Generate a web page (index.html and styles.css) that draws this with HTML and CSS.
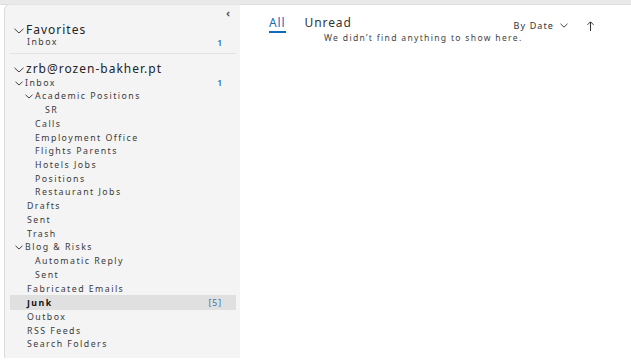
FILE: index.html
```html
<!DOCTYPE html>
<html>
<head>
<meta charset="utf-8">
<link rel="stylesheet" href="styles.css">
</head>
<body>
<div class="topband"></div>
<div class="app">
  <aside class="sidebar">
    <div class="collapse">&#8249;</div>
    <div class="group-title"><span class="chev">
      <svg width="10" height="6" viewBox="0 0 10 6"><path d="M0.5 0.8 L5 5 L9.5 0.8" fill="none" stroke="#444" stroke-width="1"/></svg></span>Favorites</div>
    <div class="row l1"><span class="name">Inbox</span><span class="count">1</span></div>
    <div class="sep"></div>
    <div class="group-title acct"><span class="chev">
      <svg width="10" height="6" viewBox="0 0 10 6"><path d="M0.5 0.8 L5 5 L9.5 0.8" fill="none" stroke="#444" stroke-width="1"/></svg></span>zrb@rozen-bakher.pt</div>
    <div class="row l0"><span class="schev"><svg width="8" height="5" viewBox="0 0 8 5"><path d="M0.5 0.8 L4 4 L7.5 0.8" fill="none" stroke="#444" stroke-width="1"/></svg></span><span class="name">Inbox</span><span class="count">1</span></div>
    <div class="row l1c"><span class="schev"><svg width="8" height="5" viewBox="0 0 8 5"><path d="M0.5 0.8 L4 4 L7.5 0.8" fill="none" stroke="#444" stroke-width="1"/></svg></span><span class="name">Academic Positions</span></div>
    <div class="row l3"><span class="name">SR</span></div>
    <div class="row l2"><span class="name">Calls</span></div>
    <div class="row l2"><span class="name">Employment Office</span></div>
    <div class="row l2"><span class="name">Flights Parents</span></div>
    <div class="row l2"><span class="name">Hotels Jobs</span></div>
    <div class="row l2"><span class="name">Positions</span></div>
    <div class="row l2"><span class="name">Restaurant Jobs</span></div>
    <div class="row l1"><span class="name">Drafts</span></div>
    <div class="row l1"><span class="name">Sent</span></div>
    <div class="row l1"><span class="name">Trash</span></div>
    <div class="row l0"><span class="schev"><svg width="8" height="5" viewBox="0 0 8 5"><path d="M0.5 0.8 L4 4 L7.5 0.8" fill="none" stroke="#444" stroke-width="1"/></svg></span><span class="name">Blog &amp; Risks</span></div>
    <div class="row l2"><span class="name">Automatic Reply</span></div>
    <div class="row l2"><span class="name">Sent</span></div>
    <div class="row l1"><span class="name">Fabricated Emails</span></div>
    <div class="row l1 selected"><span class="name">Junk</span><span class="count">[5]</span></div>
    <div class="row l1"><span class="name">Outbox</span></div>
    <div class="row l1"><span class="name">RSS Feeds</span></div>
    <div class="row l1"><span class="name">Search Folders</span></div>
  </aside>
  <main class="main">
    <div class="toolbar">
      <div class="tabs">
        <span class="tab active">All</span>
        <span class="tab">Unread</span>
      </div>
      <div class="sort">
        <span class="bydate">By Date</span>
        <svg class="sortchev" width="8" height="5" viewBox="0 0 8 5"><path d="M0.5 0.8 L4 4.2 L7.5 0.8" fill="none" stroke="#444" stroke-width="1"/></svg>
        <svg class="arrow" width="7" height="10" viewBox="0 0 7 10"><path d="M3.5 10 V1 M0.5 3.8 L3.5 0.8 L6.5 3.8" fill="none" stroke="#333" stroke-width="1"/></svg>
      </div>
    </div>
    <div class="empty">We didn’t find anything to show here.</div>
  </main>
</div>
</body>
</html>
```
FILE: styles.css
```css
* { box-sizing: border-box; }
html, body { margin: 0; padding: 0; background: #fff; }
body {
  font-family: "Noto Sans", "Open Sans", sans-serif;
  color: #242424;
  width: 631px;
  height: 364px;
  overflow: hidden;
}
.topband {
  height: 5px;
  background: #e9e9e9;
  border-bottom: 1px solid #dedede;
}
.app {
  display: flex;
  height: 353px;
}
.sidebar {
  width: 236px;
  margin-left: 4px;
  margin-top: -1px;
  background: #f4f4f4;
  border-left: 1px solid #dcdcdc;
  border-top: 1px solid #e4e4e4;
  border-top-left-radius: 6px;
  padding: 4px 4px 0 5px;
  position: relative;
}
.collapse {
  position: absolute;
  right: 10px;
  top: 1px;
  font-size: 11px;
  color: #555;
  font-weight: bold;
  line-height: 14px;
}
.group-title {
  display: flex;
  align-items: center;
  font-size: 12px;
  line-height: 12px;
  margin-top: 14.5px;
  padding-left: 4px;
  letter-spacing: 1px;
  color: #242424;
}
.group-title.acct { margin-top: 9px; margin-bottom: 1px; }
.chev { width: 12px; display: inline-flex; align-items: center; margin-top: 2px; }
.row {
  display: flex;
  align-items: center;
  height: 13.74px;
  font-size: 8.8px;
  letter-spacing: 1.45px;
  color: #3a3a3a;
  padding-right: 14px;
}
.row .name { flex: 1; white-space: nowrap; }
.row .count { color: #2f6fb3; font-weight: 600; font-size: 8.5px; letter-spacing: 0; }
.schev { width: 10px; display: inline-flex; align-items: center; margin-top: 1px; }
.l0 { padding-left: 5px; }
.l1 { padding-left: 17px; }
.l1c { padding-left: 15px; }
.l2 { padding-left: 25px; }
.l3 { padding-left: 35px; }
.sep {
  height: 1px;
  background: #e3e3e3;
  margin: 3.5px 0 0 0;
}
.selected {
  background: #e0e0e0;
  font-weight: 700;
  color: #111;
  height: 14.5px;
}
.selected .count { font-weight: 400; color: #3a6fb0; letter-spacing: 1px; }
.main {
  flex: 1;
  position: relative;
  padding-left: 29px;
}
.toolbar {
  display: flex;
  align-items: flex-start;
  height: 30px;
  padding-top: 11px;
}
.tabs { display: flex; gap: 19px; }
.tab {
  font-size: 12px;
  line-height: 14px;
  letter-spacing: 0.9px;
  color: #333;
  padding-bottom: 1px;
}
.tab.active {
  color: #0f6cbd;
  border-bottom: 2px solid #0f6cbd;
}
.sort {
  margin-left: auto;
  display: flex;
  align-items: center;
  margin-right: 37px;
  margin-top: 3px;
}
.bydate { font-size: 9px; letter-spacing: 1.1px; color: #333; }
.sortchev { margin-left: 6px; }
.arrow { margin-left: 19px; }
.empty {
  font-size: 8.6px;
  letter-spacing: 1.3px;
  color: #444;
  padding-left: 55px;
  margin-top: -3px;
}
```
